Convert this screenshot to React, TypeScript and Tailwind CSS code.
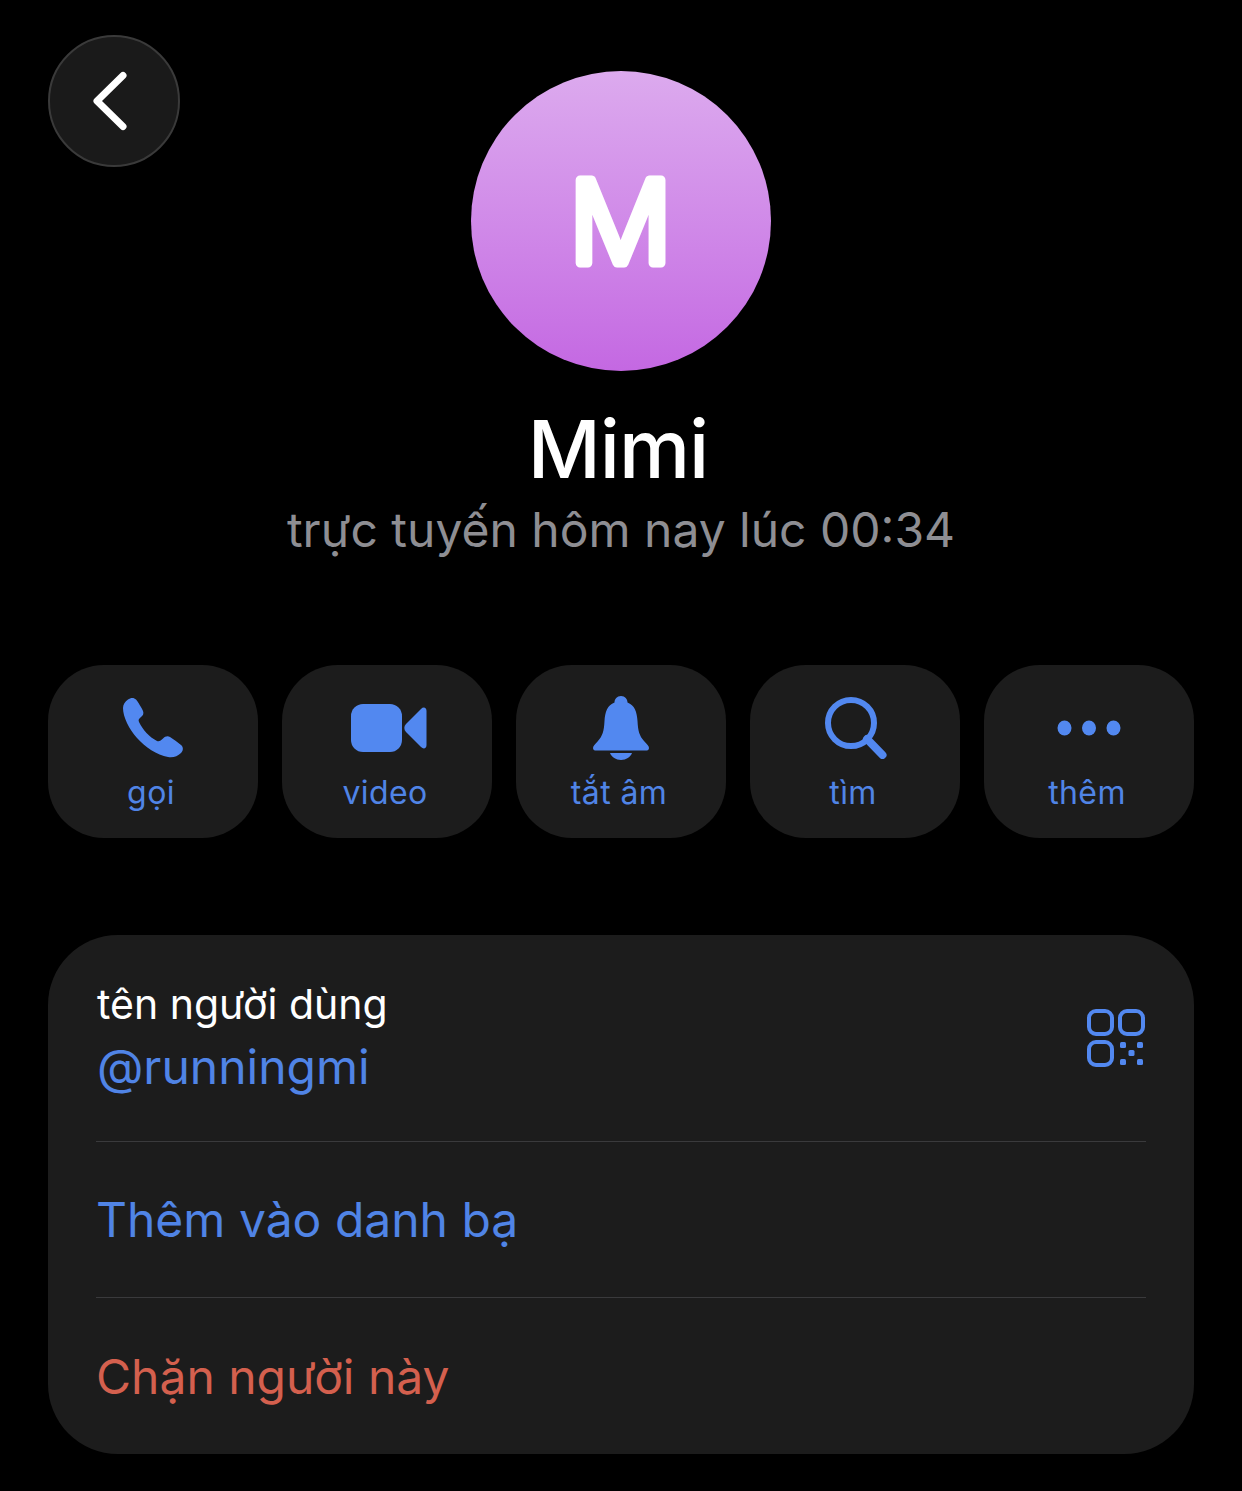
import React from 'react';

const blue = 'text-[#5288f0]';
const blueText = 'text-[#5084e6]';

const PhoneIcon = () => (
  <svg width="62" height="62" viewBox="0 0 62 62" className={blue}>
    <path
      fill="currentColor"
      d="M5 2.500C7.500.5 11 .2 13 2.500C15 5 18.500 10.500 20 14C21 16.500 20 18.500 18 20C16 21.500 15 23 16 25C20 33 26 40 34 44C36 45 38 43.500 40 41.500C42 39.500 44.500 38.500 47 40C50 42 55 45.500 58 48C60.500 50 60.500 53.500 58 56C54.500 59.500 50 60.800 45 60C34 58 22 50 14 41C6 32 0 20 0 11C0 7.500 2 4.500 5 2.500Z"
    />
  </svg>
);

const VideoIcon = () => (
  <svg width="76" height="50" viewBox="0 0 76 50" className={blue}>
    <rect x="0" y="1" width="51" height="48" rx="12" fill="currentColor" />
    <path
      fill="currentColor"
      d="M55 21L70 6C72.500 3.500 75.500 4.500 75.500 8V42C75.500 45.500 72.500 46.500 70 44L55 29C52.800 26.800 52.800 23.200 55 21Z"
    />
  </svg>
);

const BellIcon = () => (
  <svg width="56" height="64" viewBox="0 0 56 64" className={blue}>
    <path
      fill="currentColor"
      d="M28 0C32 0 34.500 3 34.500 6.500C41.500 9 44 16 44.500 25C45 35 46.500 40 51 45C54 48.500 56 50 56 52C56 54 54.500 54.500 53 54.500H3C1.500 54.500 0 54 0 52C0 50 2 48.500 5 45C9.500 40 11 35 11.500 25C12 16 14.500 9 21.500 6.500C21.500 3 24 0 28 0Z"
    />
    <path fill="currentColor" d="M17 57H39C37.500 61 33 64 28 64C23 64 18.500 61 17 57Z" />
  </svg>
);

const SearchIcon = () => (
  <svg width="62" height="62" viewBox="0 0 62 62" className={blue} fill="none">
    <circle cx="26" cy="26" r="23" stroke="currentColor" strokeWidth="6" />
    <path d="M42 42L57.500 58" stroke="currentColor" strokeWidth="8" strokeLinecap="round" />
  </svg>
);

const MoreIcon = () => (
  <svg width="64" height="16" viewBox="0 0 64 16" className={blue}>
    <ellipse cx="7.500" cy="8" rx="7" ry="7.500" fill="currentColor" />
    <ellipse cx="32" cy="8" rx="7" ry="7.500" fill="currentColor" />
    <ellipse cx="56.500" cy="8" rx="7" ry="7.500" fill="currentColor" />
  </svg>
);

const QrIcon = () => (
  <svg width="58" height="58" viewBox="0 0 58 58" className={blue} fill="none">
    <rect x="2" y="2" width="23" height="23" rx="7" stroke="currentColor" strokeWidth="4" />
    <rect x="33" y="2" width="23" height="23" rx="7" stroke="currentColor" strokeWidth="4" />
    <rect x="2" y="33" width="23" height="23" rx="7" stroke="currentColor" strokeWidth="4" />
    <rect x="33" y="33" width="6" height="6" rx="1.500" fill="currentColor" />
    <rect x="50" y="33" width="6" height="6" rx="1.500" fill="currentColor" />
    <rect x="41.500" y="41" width="6" height="6" rx="1.500" fill="currentColor" />
    <rect x="33" y="50" width="6" height="6" rx="1.500" fill="currentColor" />
    <rect x="50" y="50" width="6" height="6" rx="1.500" fill="currentColor" />
  </svg>
);

const actions = [
  { label: 'gọi', icon: <PhoneIcon />, shift: 'translate-x-[1px]' },
  { label: 'video', icon: <VideoIcon />, shift: 'translate-x-[2px]' },
  { label: 'tắt âm', icon: <BellIcon />, shift: 'translate-x-[0px]' },
  { label: 'tìm', icon: <SearchIcon />, shift: 'translate-x-[1px]' },
  { label: 'thêm', icon: <MoreIcon />, shift: 'translate-x-[0px]' },
];

export default function App() {
  return (
    <div className="relative h-[1491px] w-[1242px] overflow-hidden bg-black font-['Inter','Noto_Sans',sans-serif] text-white">
      <button className="absolute left-[48px] top-[35px] flex h-[132px] w-[132px] items-center justify-center rounded-full border-2 border-[#3a3a3a] bg-[#1a1a1a]">
        <svg width="36" height="60" viewBox="0 0 36 60" fill="none" className="-translate-x-[4px]">
          <path d="M31 4.500L5 30L31 55.500" stroke="white" strokeWidth="7" strokeLinecap="round" strokeLinejoin="round" />
        </svg>
      </button>

      <div className="flex flex-col items-center pt-[71px]">
        <div className="flex h-[300px] w-[300px] items-center justify-center rounded-full bg-gradient-to-b from-[#dcaaee] to-[#c468e2]">
          <svg width="140" height="140" viewBox="0 0 140 140">
            <text
              x="69.500"
              y="111.500"
              textAnchor="middle"
              fontSize="114"
              fontWeight="300"
              fill="white"
              stroke="white"
              strokeWidth="9"
              strokeLinejoin="round"
            >
              M
            </text>
          </svg>
        </div>
        <h1 className="mt-[32px] h-[92px] -translate-x-[3px] text-[80px] leading-[92px] font-medium tracking-[-1px]">Mimi</h1>
        <p className="mt-[5px] text-[48px] leading-[60px] text-[#8e8e93]">trực tuyến hôm nay lúc 00:34</p>
      </div>

      <div className="mx-[48px] mt-[105px] flex gap-[24px]">
        {actions.map((a) => (
          <div key={a.label} className="flex h-[173px] w-[210px] flex-col items-center rounded-[56px] bg-[#1c1c1c]">
            <div className={`flex h-[113px] items-center pt-[13px] ${a.shift}`}>{a.icon}</div>
            <span className={`-translate-x-[2px] text-[32px] leading-[30px] tracking-[0.4px] ${blueText}`}>{a.label}</span>
          </div>
        ))}
      </div>

      <div className="mx-[48px] mt-[97px] h-[519px] rounded-[70px] bg-[#1c1c1c] px-[48px]">
        <div className="flex h-[207px] items-center justify-between border-b border-[#3a3a3c]">
          <div className="ml-[1px]">
            <div className="text-[41px] leading-[46px] text-white">tên người dùng</div>
            <div className={`mt-[12px] text-[48px] leading-[56px] ${blueText}`}>@runningmi</div>
          </div>
          <div className="-translate-x-[1px]">
            <QrIcon />
          </div>
        </div>
        <div className={`flex h-[156px] items-center border-b border-[#3a3a3c] pt-[1px] text-[48px] ${blueText}`}>Thêm vào danh bạ</div>
        <div className="flex h-[156px] items-center pt-[1px] text-[48px] text-[#d4604e]">Chặn người này</div>
      </div>
    </div>
  );
}
